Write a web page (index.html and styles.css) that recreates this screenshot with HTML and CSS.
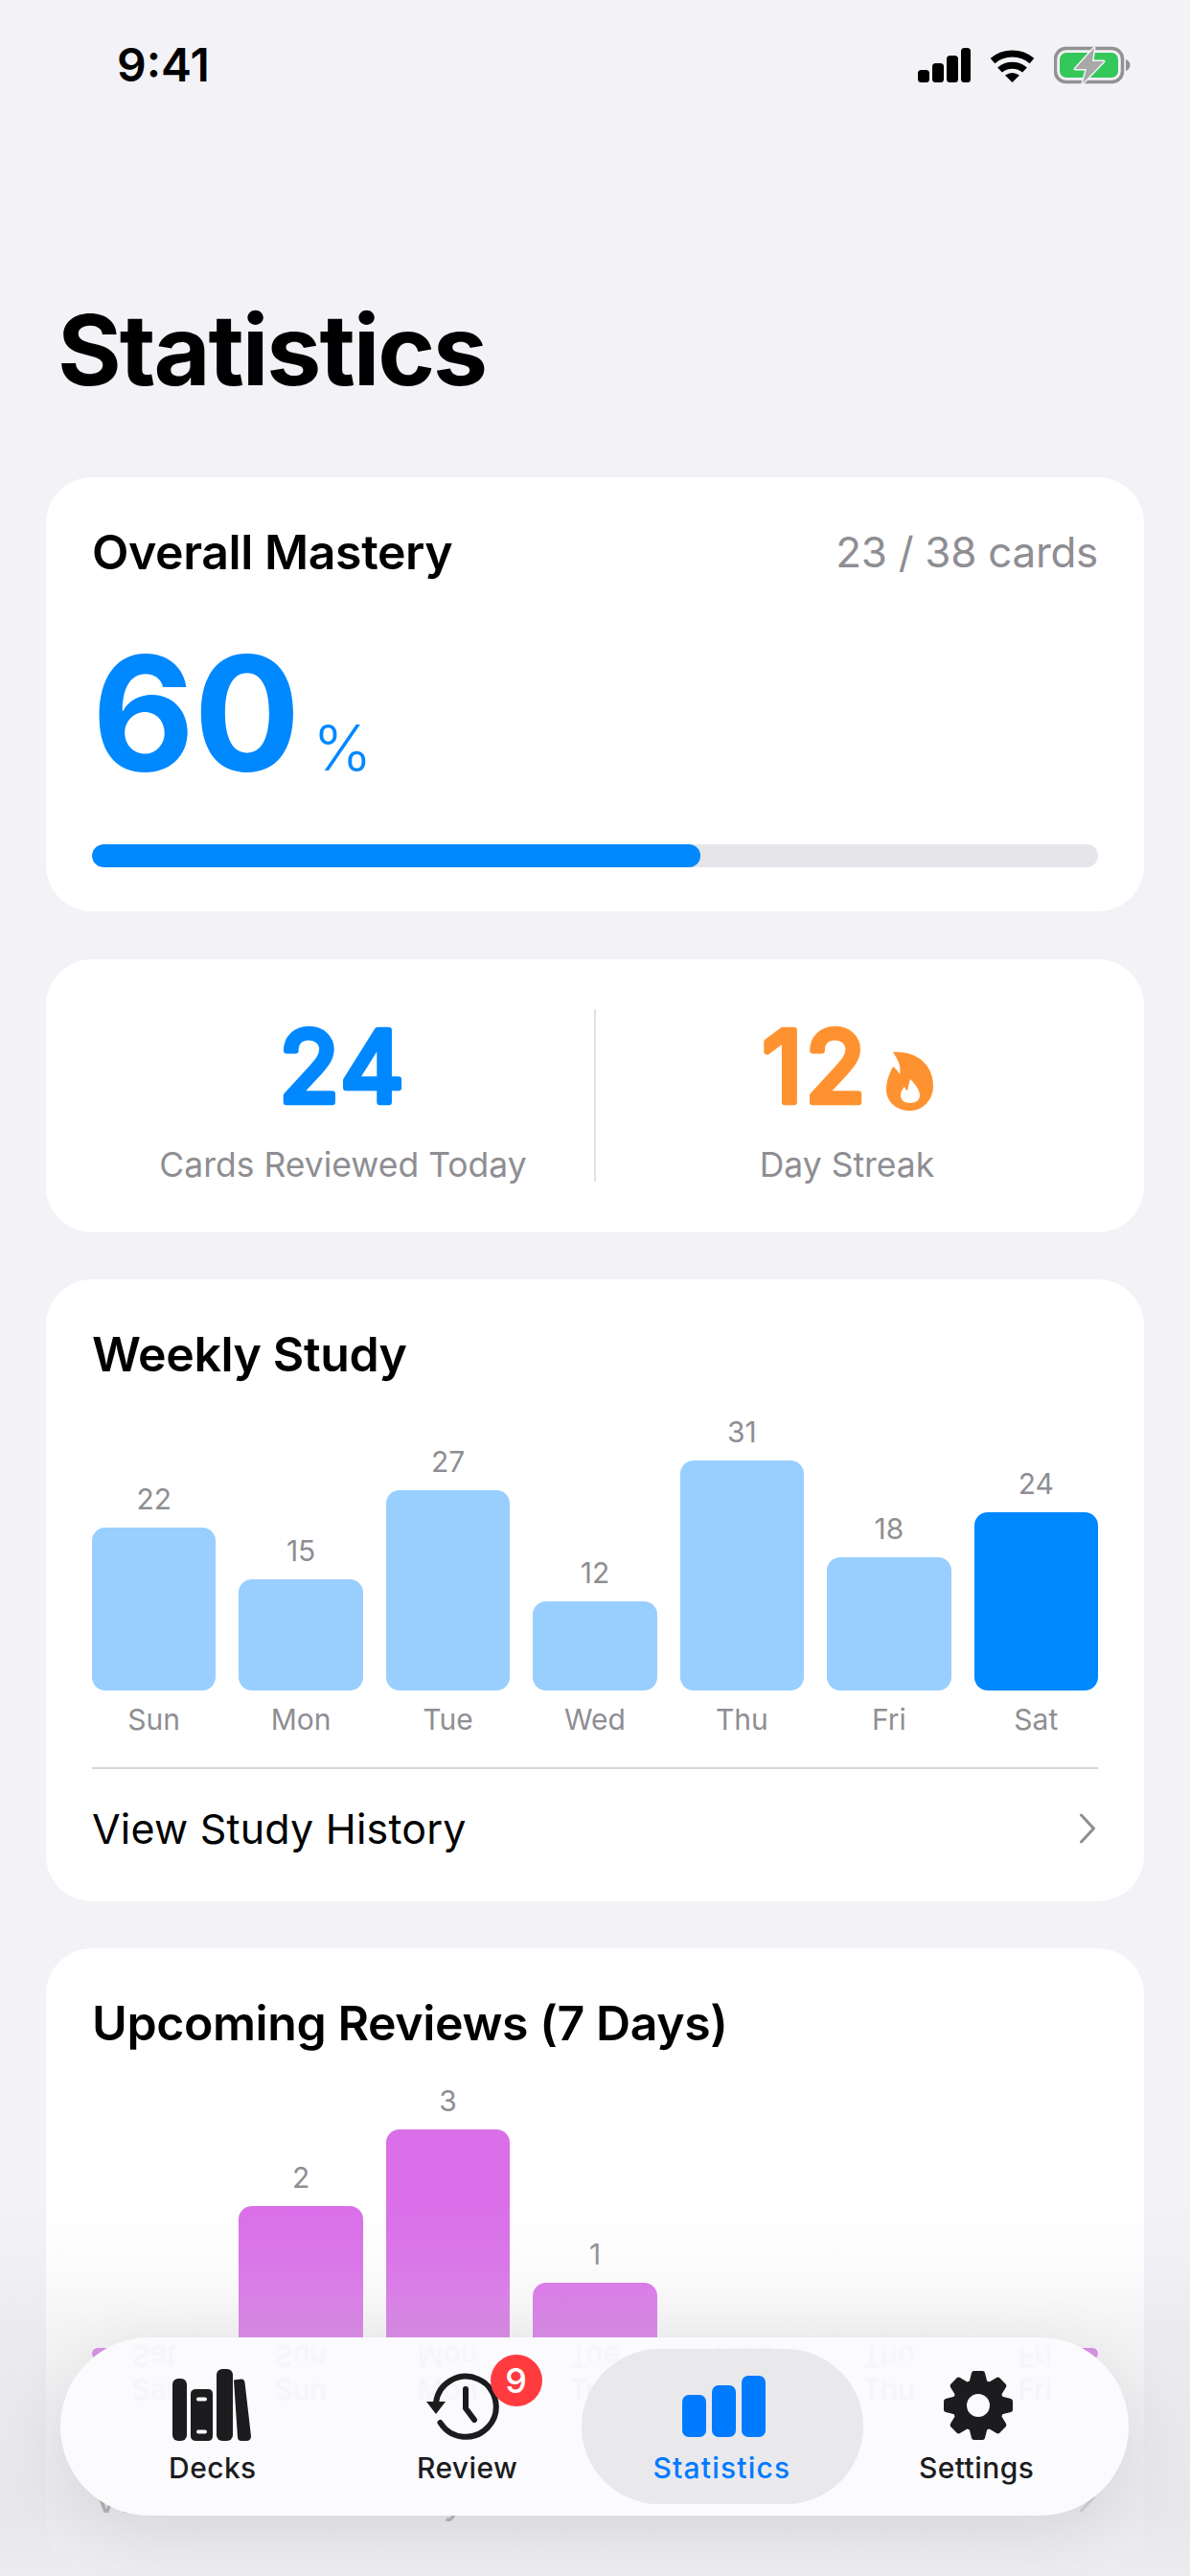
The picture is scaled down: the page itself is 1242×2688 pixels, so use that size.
FILE: index.html
```html
<!DOCTYPE html>
<html lang="en">
<head>
<meta charset="utf-8">
<title>Statistics</title>
<link rel="stylesheet" href="styles.css">
</head>
<body>
<div class="screen">
  <header class="status">
    <span class="status-time">9:41</span>
    <div class="status-icons">
      <svg class="ic-signal" width="55" height="36" viewBox="0 0 55 36"><rect x="0" y="23" width="12" height="13" rx="3.5"/><rect x="15" y="16" width="12" height="20" rx="3.5"/><rect x="30" y="8" width="12" height="28" rx="3.5"/><rect x="45" y="0" width="10" height="36" rx="3.5"/></svg>
      <svg class="ic-wifi" width="47" height="36" viewBox="0 0 47 36"><path d="M3 13.5C14.500 3.500 32.500 3.500 44 13.500" fill="none" stroke="#000" stroke-width="7"/><path d="M10.500 23C17.500 16.500 29.500 16.500 36.500 23" fill="none" stroke="#000" stroke-width="7"/><path d="M23.500 36L16 28.500Q23.500 23.500 31 28.500Z"/></svg>
      <svg class="ic-battery" width="80" height="40" viewBox="0 0 80 40"><rect x="1.500" y="2.500" width="70" height="35" rx="11" fill="none" stroke="#929292" stroke-width="3.500"/><rect x="6" y="7" width="61" height="26" rx="7" fill="#34c85a"/><path d="M75 14C78 15 79.500 17.500 79.500 20C79.500 22.500 78 25 75 26Z" fill="#929292"/><path class="bolt" d="M42 2L22 24H34L30 39L52 16H40Z"/></svg>
    </div>
  </header>

  <h1 class="page-title">Statistics</h1>

  <main class="stack">
    <section class="card card-mastery">
      <div class="card-head">
        <h2 class="card-title">Overall Mastery</h2>
        <span class="card-meta">23 / 38 cards</span>
      </div>
      <div class="mastery-value"><span class="mastery-num">60</span><span class="mastery-unit">%</span></div>
      <div class="progress"><div class="progress-fill" style="width:60.5%"></div></div>
    </section>

    <section class="card card-stats">
      <div class="stat">
        <div class="stat-figure">
          <svg class="stat-num stat-num-blue" width="140" height="150" viewBox="0 0 140 150"><text x="70" y="110" text-anchor="middle">24</text></svg>
        </div>
        <div class="stat-label">Cards Reviewed Today</div>
      </div>
      <div class="stat-divider"></div>
      <div class="stat">
        <div class="stat-figure">
          <svg class="stat-num stat-num-orange" width="122" height="150" viewBox="0 0 122 150"><text x="56" y="110" text-anchor="middle">12</text></svg>
          <svg class="flame" width="49" height="62" viewBox="0 0 49 62"><path fill-rule="evenodd" d="M7 1C30 -1 49 13 49 36C49 51 38 62 25 62C10 62 0 52 0 40C0 30 4 22 7 16C10 18 13 22 14 24C16 16 12 8 7 1ZM25 29C24 33 23 37 22 41C21 41 20 39 19 37C17 39 15 42 15 46C15 51 19 54 25 54C31 54 35 51 35 46C35 41 31 35 25 29Z"/></svg>
        </div>
        <div class="stat-label">Day Streak</div>
      </div>
    </section>

    <section class="card card-chart">
      <h2 class="card-title">Weekly Study</h2>
      <div class="chart">
        <div class="col"><span class="col-value">22</span><div class="bar bar-blue" style="height:170px"></div><span class="col-label">Sun</span></div>
        <div class="col"><span class="col-value">15</span><div class="bar bar-blue" style="height:116px"></div><span class="col-label">Mon</span></div>
        <div class="col"><span class="col-value">27</span><div class="bar bar-blue" style="height:209px"></div><span class="col-label">Tue</span></div>
        <div class="col"><span class="col-value">12</span><div class="bar bar-blue" style="height:93px"></div><span class="col-label">Wed</span></div>
        <div class="col"><span class="col-value">31</span><div class="bar bar-blue" style="height:240px"></div><span class="col-label">Thu</span></div>
        <div class="col"><span class="col-value">18</span><div class="bar bar-blue" style="height:139px"></div><span class="col-label">Fri</span></div>
        <div class="col"><span class="col-value">24</span><div class="bar bar-today" style="height:186px"></div><span class="col-label">Sat</span></div>
      </div>
      <div class="card-link">
        <span>View Study History</span>
        <svg class="chevron" width="18" height="32" viewBox="0 0 18 32"><path d="M2.500 2L15.500 16L2.500 30"/></svg>
      </div>
    </section>

    <section class="card card-chart">
      <h2 class="card-title">Upcoming Reviews (7 Days)</h2>
      <div class="chart">
        <div class="col"><div class="bar bar-purple" style="height:12px"></div><span class="col-label">Sat</span></div>
        <div class="col"><span class="col-value">2</span><div class="bar bar-purple" style="height:160px"></div><span class="col-label">Sun</span></div>
        <div class="col"><span class="col-value">3</span><div class="bar bar-purple" style="height:240px"></div><span class="col-label">Mon</span></div>
        <div class="col"><span class="col-value">1</span><div class="bar bar-purple" style="height:80px"></div><span class="col-label">Tue</span></div>
        <div class="col"><div class="bar bar-purple" style="height:12px"></div><span class="col-label">Wed</span></div>
        <div class="col"><div class="bar bar-purple" style="height:12px"></div><span class="col-label">Thu</span></div>
        <div class="col"><div class="bar bar-purple" style="height:12px"></div><span class="col-label">Fri</span></div>
      </div>
      <div class="card-link">
        <span>View Review Study</span>
        <svg class="chevron" width="18" height="32" viewBox="0 0 18 32"><path d="M2.500 2L15.500 16L2.500 30"/></svg>
      </div>
    </section>
  </main>

  <div class="bottom-fade"></div>

  <nav class="tabbar">
    <div class="tab-ghost" aria-hidden="true">
      <div class="ghost-row ghost-flip"><span>Sat</span><span>Sun</span><span>Mon</span><span>Tue</span><span>Wed</span><span>Thu</span><span>Fri</span></div>
      <div class="ghost-row ghost-true"><span>Sat</span><span>Sun</span><span>Mon</span><span>Tue</span><span>Wed</span><span>Thu</span><span>Fri</span></div>
    </div>
    <div class="tab">
      <svg class="tab-icon" width="84" height="76" viewBox="0 0 84 76"><rect x="0" y="10" width="15" height="65" rx="6"/><path fill-rule="evenodd" d="M25 21H37Q42 21 42 26V70Q42 75 37 75H25Q19 75 19 70V26Q19 21 25 21ZM27 29.500Q25 29.500 25 31.500Q25 33.500 27 33.500H34Q36 33.500 36 31.500Q36 29.500 34 29.500ZM27 63.500Q25 63.500 25 65.500Q25 67.500 27 67.500H34Q36 67.500 36 65.500Q36 63.500 34 63.500Z"/><rect x="46" y="0" width="17" height="75" rx="6"/><path d="M64 11.500L72 10.500Q75 10.500 75.500 14L82 70Q82 74.500 78 75L72 75Q68 75 68 71Z"/></svg>
      <span class="tab-label">Decks</span>
    </div>
    <div class="tab">
      <span class="tab-icon-wrap">
        <svg class="tab-icon tab-icon-line" width="80" height="76" viewBox="0 0 80 76"><path class="clock-ring" d="M11.500 56A31.500 31.500 0 1 0 7 35"/><path class="clock-head" d="M-3 34H17L7 47Z"/><path class="clock-ring" d="M38 21V41L47 53"/></svg>
        <span class="badge">9</span>
      </span>
      <span class="tab-label">Review</span>
    </div>
    <div class="tab tab-active">
      <svg class="tab-icon" width="87" height="66" viewBox="0 0 87 66"><rect x="0" y="20" width="25" height="44" rx="7"/><rect x="31" y="10" width="25" height="54" rx="7"/><rect x="62" y="0" width="25" height="64" rx="7"/></svg>
      <span class="tab-label">Statistics</span>
    </div>
    <div class="tab">
      <svg class="tab-icon tab-gear" width="72" height="76" viewBox="-36 -38 72 76"><g class="gear-teeth"><path d="M-9.500 -24L-7 -34Q-6.500 -36 -4.500 -36H4.500Q6.500 -36 7 -34L9.500 -24Z"/><path transform="rotate(45)" d="M-9.500 -24L-7 -34Q-6.500 -36 -4.500 -36H4.500Q6.500 -36 7 -34L9.500 -24Z"/><path transform="rotate(90)" d="M-9.500 -24L-7 -34Q-6.500 -36 -4.500 -36H4.500Q6.500 -36 7 -34L9.500 -24Z"/><path transform="rotate(135)" d="M-9.500 -24L-7 -34Q-6.500 -36 -4.500 -36H4.500Q6.500 -36 7 -34L9.500 -24Z"/><path transform="rotate(180)" d="M-9.500 -24L-7 -34Q-6.500 -36 -4.500 -36H4.500Q6.500 -36 7 -34L9.500 -24Z"/><path transform="rotate(225)" d="M-9.500 -24L-7 -34Q-6.500 -36 -4.500 -36H4.500Q6.500 -36 7 -34L9.500 -24Z"/><path transform="rotate(270)" d="M-9.500 -24L-7 -34Q-6.500 -36 -4.500 -36H4.500Q6.500 -36 7 -34L9.500 -24Z"/><path transform="rotate(315)" d="M-9.500 -24L-7 -34Q-6.500 -36 -4.500 -36H4.500Q6.500 -36 7 -34L9.500 -24Z"/></g><path fill-rule="evenodd" d="M0 -27A27 27 0 1 1 0 27A27 27 0 1 1 0 -27ZM0 -12A12 12 0 1 0 0 12A12 12 0 1 0 0 -12Z"/></svg>
      <span class="tab-label">Settings</span>
    </div>
  </nav>
</div>
</body>
</html>
```

FILE: styles.css
```css
* { box-sizing: border-box; }
html, body { margin: 0; padding: 0; }
body { background: #f2f2f7; font-family: "Inter", "Liberation Sans", sans-serif; color: #000; }

.screen { position: relative; width: 1242px; height: 2688px; overflow: hidden; background: #f2f2f7; }

/* Status bar */
.status { display: flex; justify-content: space-between; align-items: center; height: 48px; margin-top: 44px; padding: 0 62px 0 122px; }
.status-time { font-size: 48px; font-weight: 600; line-height: 48px; }
.status-icons { display: flex; align-items: center; gap: 20px; }
.bolt { fill: #a8a8a8; stroke: #f2f2f7; stroke-width: 3; paint-order: stroke; stroke-linejoin: round; }

.page-title { margin: 213px 0 0; padding-left: 60px; font-size: 102px; line-height: 120px; font-weight: 700; letter-spacing: -2.1px; }

/* Cards */
.stack { display: flex; flex-direction: column; gap: 49.500px; margin: 73px 48px 0; }
.card { background: #fff; border-radius: 48px; padding: 42px 48px 0; flex: none; }
.card-head { display: flex; justify-content: space-between; align-items: center; }
.card-title { margin: 0; font-size: 50px; line-height: 72px; font-weight: 600; letter-spacing: -0.4px; }
.card-meta { font-size: 44px; line-height: 72px; color: #8e8e93; letter-spacing: -0.3px; }

.card-mastery { height: 453px; }
.mastery-value { display: flex; align-items: baseline; gap: 14px; margin-top: 38px; height: 188px; color: #0088ff; }
.mastery-num { font-size: 165px; line-height: 188px; font-weight: 700; letter-spacing: -1px; }
.mastery-unit { font-size: 66px; line-height: 60px; font-weight: 300; }
.progress { height: 24px; margin-top: 43px; border-radius: 12px; background: #e5e5ea; overflow: hidden; }
.progress-fill { height: 100%; border-radius: 12px; background: #0088ff; }

.card-stats { display: flex; align-items: center; height: 285px; padding: 0 48px; }
.stat { flex: 1; align-self: flex-start; padding-top: 39px; display: flex; flex-direction: column; align-items: center; }
.stat-divider { width: 2px; height: 180px; background: #e2e2e5; }
.stat-figure { display: flex; align-items: flex-start; height: 150px; }
.stat-num text { font-size: 103px; font-weight: 400; font-family: "Inter", sans-serif; letter-spacing: 3px; stroke-width: 6.500px; stroke-linejoin: round; stroke-linecap: round; }
.stat-num-blue text { fill: #0088ff; stroke: #0088ff; }
.stat-num-orange text { fill: #ff9230; stroke: #ff9230; }
.flame { fill: #ff9230; margin: 57px 0 0 8px; }
.stat-label { margin-top: 4px; font-size: 35.500px; line-height: 44px; color: #8e8e93; }

.card-chart { height: 648.500px; padding-bottom: 8px; }
.chart { display: grid; grid-template-columns: repeat(7, 1fr); gap: 24px; margin-top: 27px; align-items: end; }
.col { display: flex; flex-direction: column; align-items: stretch; }
.col-value, .col-label { font-size: 30px; line-height: 36px; color: #8e8e93; text-align: center; }
.col-value { margin-bottom: 12px; }
.col-label { margin-top: 12px; }
.bar { border-radius: 14px; }
.bar-blue { background: #99cfff; }
.bar-today { background: #0088ff; }
.bar-purple { background: #da6fe9; }

.card-link { display: flex; justify-content: space-between; align-items: center; height: 126px; margin-top: 32px; border-top: 2px solid #d5d5d8; font-size: 43px; letter-spacing: 0.2px; }
.chevron { fill: none; stroke: #8e8e93; stroke-width: 3; stroke-linecap: round; stroke-linejoin: round; margin-right: 2px; }

/* Overlays */
.bottom-fade { position: absolute; left: 0; right: 0; bottom: 0; height: 388px; background: linear-gradient(to bottom, rgba(213,213,218,0) 0%, rgba(213,213,218,0.08) 16%, rgba(213,213,218,0.26) 33%, rgba(228,228,232,0.78) 82%, rgba(236,236,240,0.94) 100%); pointer-events: none; }

.tabbar { position: absolute; left: 63px; top: 2439px; width: 1115px; height: 186px; padding: 33px 26px 0; border-radius: 93px; background: #fbfbfe; box-shadow: 0 14px 70px rgba(0,0,0,0.09); display: grid; grid-template-columns: repeat(4, 1fr); }
.tab-ghost { position: absolute; inset: 0; border-radius: inherit; overflow: hidden; }
.ghost-row { position: absolute; left: 33px; right: 33px; display: grid; grid-template-columns: repeat(7, 1fr); gap: 24px; font-size: 30px; line-height: 36px; text-align: center; color: #a4a4ab; filter: blur(1.2px); }
.ghost-true { top: 36px; opacity: 0.08; }
.ghost-flip { top: 2px; opacity: 0.07; transform: scaleY(-1); }

.tab { position: relative; display: flex; flex-direction: column; align-items: center; color: #1c1c1e; }
.tab > .tab-icon, .tab-icon-wrap { height: 76px; }
.tab-icon { display: block; fill: #1c1c1e; position: relative; overflow: visible; }
.tab-icon-wrap { position: relative; display: block; }
.clock-ring { fill: none; stroke: #1c1c1e; stroke-width: 6; stroke-linecap: round; stroke-linejoin: round; }
.clock-head { fill: #1c1c1e; }
.tab-gear { margin-left: 3px; }
.tab-label { position: relative; margin-top: 8px; font-size: 30px; line-height: 38px; font-weight: 500; letter-spacing: 0.4px; }
.badge { position: absolute; left: 64px; top: -15px; width: 54px; height: 54px; border-radius: 50%; background: #ff3b40; color: #fff; font-size: 36px; line-height: 54px; font-weight: 500; text-align: center; }

.tab-active { color: #007aff; }
.tab-active .tab-label { letter-spacing: 1.2px; }
.tab-active::before { content: ""; position: absolute; left: -14px; right: -15px; top: -21px; height: 162px; border-radius: 81px; background: #e9e9ec; }
.tab-active .tab-icon { fill: #007aff; margin: 7px 0 3px 4px; height: 66px; }
```
